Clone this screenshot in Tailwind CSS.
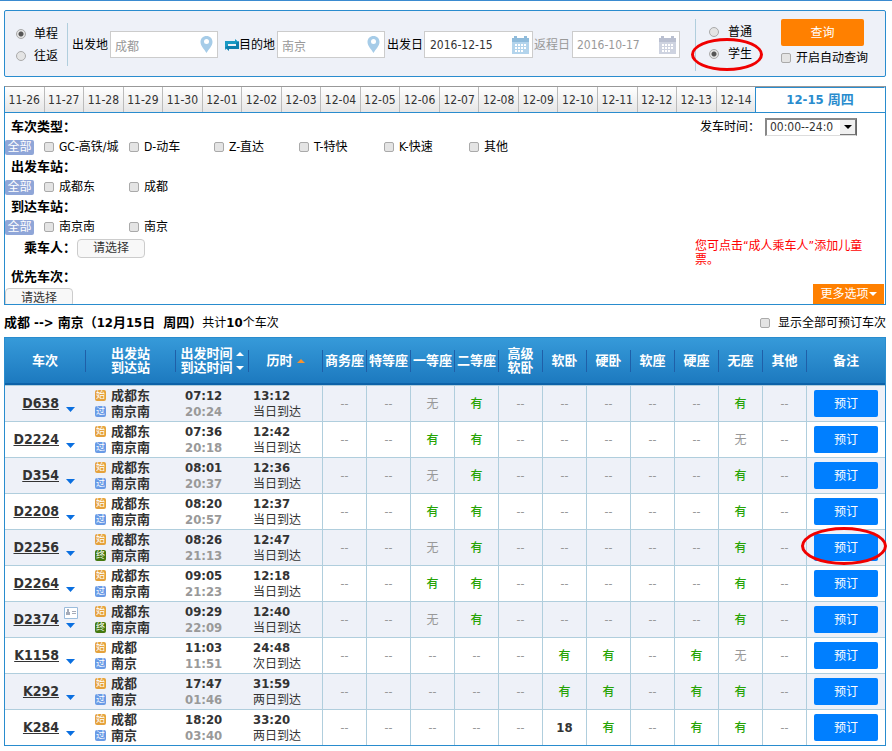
<!DOCTYPE html>
<html lang="zh-CN">
<head>
    <meta charset="UTF-8">
    <meta name="viewport" content="width=device-width, initial-scale=1.0">
    <title>车票预订 - 余票查询</title>
    <script src="https://cdn.jsdelivr.net/npm/@tailwindcss/browser@4"></script>
</head>
<body class="bg-white border-t border-[#3b8bd0] pl-1 pr-[6px] text-[12px] leading-4 text-black font-['DejaVu_Sans_Condensed','Noto_Sans_CJK_SC',sans-serif]">

    <!-- Search form -->
    <form class="mt-[9px] h-[67px] pt-[2px] flex items-center whitespace-nowrap rounded-xs border border-[#298cce] bg-[#eef1f8]">
        <div class="ml-[11px] w-[51px] flex flex-col gap-[6px]">
            <label class="flex items-center gap-[8px]">
                <input type="radio" name="trip" checked class="appearance-none size-[10px] rounded-full border border-[#aaa] bg-[#e4e4e4] checked:bg-[radial-gradient(circle,#555_2px,#e4e4e4_3px)]">单程
            </label>
            <label class="flex items-center gap-[8px]">
                <input type="radio" name="trip" class="appearance-none size-[10px] rounded-full border border-[#aaa] bg-[#e4e4e4] checked:bg-[radial-gradient(circle,#555_2px,#e4e4e4_3px)]">往返
            </label>
        </div>
        <div class="h-[43px] border-l border-[#b0cedd]"></div>

        <label for="from" class="ml-1 w-[38px]">出发地</label>
        <div class="relative w-[108px]">
            <input type="text" id="from" value="成都" class="w-full h-[27px] pl-1 pt-px border border-[#ccc] bg-white text-[#999]">
            <svg class="absolute right-[5px] top-[5px]" width="13" height="17" viewBox="0 0 13 17"><path d="M6.500 0C2.900 0 .5 2.600.5 6c0 4 4 7.500 6 11 2-3.500 6-7 6-11 0-3.400-2.400-6-6-6z" fill="#a6cce8"/><circle cx="6.500" cy="5.500" r="2.500" fill="#fff"/></svg>
        </div>
        <svg class="ml-[7px]" width="14" height="12" viewBox="0 0 14 12"><path d="M0 11V2h10V0l4 3.500L10 6V5H3v3z" fill="#1a9ac4"/><path d="M14 2v8H4v2L0 8.500 4 6v1h7V4z" fill="#0e7fae"/><path d="M3 5h8v2H3z" fill="#eef1f8"/></svg>
        <label for="to" class="w-[38px]">目的地</label>
        <div class="relative w-[108px]">
            <input type="text" id="to" value="南京" class="w-full h-[27px] pl-1 pt-px border border-[#ccc] bg-white text-[#999]">
            <svg class="absolute right-[5px] top-[5px]" width="13" height="17" viewBox="0 0 13 17"><path d="M6.500 0C2.900 0 .5 2.600.5 6c0 4 4 7.500 6 11 2-3.500 6-7 6-11 0-3.400-2.400-6-6-6z" fill="#a6cce8"/><circle cx="6.500" cy="5.500" r="2.500" fill="#fff"/></svg>
        </div>
        <label for="goDate" class="ml-[2px] w-[37px]">出发日</label>
        <div class="relative w-[109px]">
            <input type="text" id="goDate" value="2016-12-15" class="w-full h-[27px] pl-[5px] pt-px border border-[#ccc] bg-white text-[#333]">
            <svg class="absolute right-[4px] top-[5px]" width="17" height="18" viewBox="0 0 17 18"><path d="M0 2h2V0h3v2h7V0h3v2h2v4H0z" fill="#8fbbdb"/><path d="M0 6h17v12H0z" fill="#b3d4ec"/><path d="M3 8h2v2H3zM6 8h2v2H6zM9 8h2v2H9zM12 8h2v2h-2zM3 11h2v2H3zM6 11h2v2H6zM9 11h2v2H9zM12 11h2v2h-2zM3 14h2v2H3zM6 14h2v2H6zM9 14h2v2H9z" fill="#fff"/></svg>
        </div>
        <label for="backDate" class="ml-px w-[38px] text-[#999]">返程日</label>
        <div class="relative w-[108px]">
            <input type="text" id="backDate" value="2016-10-17" class="w-full h-[27px] pl-1 pt-px border border-[#ccc] bg-white text-[#999]">
            <svg class="absolute right-[4px] top-[5px]" width="17" height="18" viewBox="0 0 17 18"><path d="M0 2h2V0h3v2h7V0h3v2h2v4H0z" fill="#b9bfd0"/><path d="M0 6h17v12H0z" fill="#ced3e0"/><path d="M3 8h2v2H3zM6 8h2v2H6zM9 8h2v2H9zM12 8h2v2h-2zM3 11h2v2H3zM6 11h2v2H6zM9 11h2v2H9zM12 11h2v2h-2zM3 14h2v2H3zM6 14h2v2H6zM9 14h2v2H9z" fill="#fff"/></svg>
        </div>

        <div class="ml-[15px] h-[52px] border-l border-[#b0cedd]"></div>
        <div class="ml-[13px] mb-[3px] w-[72px] flex flex-col items-start gap-[6px]">
            <label class="flex items-center gap-[9px]">
                <input type="radio" name="ticket" class="appearance-none size-[10px] rounded-full border border-[#aaa] bg-[#e4e4e4] checked:bg-[radial-gradient(circle,#555_2px,#e4e4e4_3px)]">普通
            </label>
            <label class="relative flex items-center gap-[9px]">
                <input type="radio" name="ticket" checked class="appearance-none size-[10px] rounded-full border border-[#aaa] bg-[#e4e4e4] checked:bg-[radial-gradient(circle,#555_2px,#e4e4e4_3px)]">学生
                <span class="absolute -left-[18px] -top-2 w-[72px] h-[33px] rounded-[50%] border-3 border-[#f00000]"></span>
            </label>
        </div>
        <div class="flex flex-col items-start gap-1 mb-1">
            <button type="button" class="w-[83px] h-[27px] rounded-xs bg-[#ff8000] text-white">查询</button>
            <label class="flex items-center gap-[5px]">
                <input type="checkbox" class="appearance-none size-[10px] rounded-xs border border-[#aaa] bg-[#e4e4e4] checked:bg-[#555]">开启自动查询
            </label>
        </div>
    </form>

    <!-- Date tabs -->
    <div class="mt-[9px] h-[27px] flex border border-t-[#999] border-x-[#298cce] border-b-[#298cce] text-[#333]">
        <div id="dateTabs" class="flex-1 flex bg-linear-to-b from-white to-[#e6e6e6]"></div>
        <button class="w-[130px] border-x border-t border-[#298cce] border-r-white bg-white text-[13px] font-bold text-[#298cce]">12-15 周四</button>
    </div>

    <!-- Filters -->
    <div class="flex justify-between border border-t-0 border-[#298cce] overflow-hidden">
        <div class="pt-1">
            <h3 class="h-5 pl-[6px] text-[13px] leading-5 font-bold">车次类型：</h3>
            <div id="typeFilter" class="h-5 flex items-center"></div>
            <h3 class="h-5 pl-[6px] text-[13px] leading-5 font-bold">出发车站：</h3>
            <div id="fromFilter" class="h-5 flex items-center"></div>
            <h3 class="h-5 pl-[6px] text-[13px] leading-5 font-bold">到达车站：</h3>
            <div id="toFilter" class="h-5 flex items-center"></div>
            <div class="h-[22px] flex items-center pl-[19px]">
                <h3 class="w-[53px] text-[13px] leading-5 font-bold whitespace-nowrap">乘车人：</h3>
                <button class="w-[68px] h-[19px] rounded border border-[#ccc] bg-[#f8f8f8] leading-4 text-[#333]">请选择</button>
            </div>
            <h3 class="mt-2 h-5 pl-[6px] text-[13px] leading-5 font-bold">优先车次：</h3>
            <div class="mt-px h-4">
                <button class="w-[68px] h-[19px] rounded border border-[#ccc] bg-[#f8f8f8] leading-4 text-[#333]">请选择</button>
            </div>
        </div>
        <div class="w-[190px] flex flex-col justify-between">
            <div class="pt-[5px] pl-[5px] flex items-center">
                <label for="startTime" class="w-[65px]">发车时间：</label>
                <div class="relative w-[92px]">
                    <select id="startTime" class="block appearance-none w-full h-[18px] pl-[3px] pr-[18px] border-2 border-[#888] border-r border-b border-r-[#666] border-b-[#ddd] bg-white leading-[15px] text-[#333]">
                        <option value="00002400">00:00--24:0</option>
                        <option value="00000600">00:00--06:0</option>
                        <option value="06001200">06:00--12:0</option>
                        <option value="12001800">12:00--18:0</option>
                        <option value="18002400">18:00--24:0</option>
                    </select>
                    <span class="pointer-events-none absolute right-px top-[2px] w-4 h-[15px] flex items-center justify-center border-r border-b border-[#777] bg-[#f0f0f0]">
                        <svg width="8" height="4" viewBox="0 0 8 4"><path d="M0 0h8L4 4z" fill="#000"/></svg>
                    </span>
                </div>
            </div>
            <div>
                <p class="w-[170px] mb-[17px] leading-[14px] text-[#f00]">您可点击“成人乘车人”添加儿童票。</p>
                <div class="flex justify-end pr-px">
                    <button class="w-[71px] h-5 flex items-center justify-center bg-[#ff8000] text-white">更多选项<svg width="8" height="4" viewBox="0 0 8 4"><path d="M0 0h8L4 4z" fill="#fff"/></svg></button>
                </div>
            </div>
        </div>
    </div>

    <!-- Result summary -->
    <div class="h-8 pt-[3px] flex items-center justify-between">
        <p class="whitespace-pre"><b class="text-[13px]">成都 --&gt; 南京（12月15日  周四）</b>共计<b class="text-[13px]">10</b>个车次</p>
        <label class="flex items-center gap-2">
            <input type="checkbox" class="appearance-none size-[10px] rounded-xs border border-[#aaa] bg-[#e4e4e4] checked:bg-[#555]">显示全部可预订车次
        </label>
    </div>

    <!-- Train list -->
    <table class="w-full table-fixed border-separate border-spacing-0 border border-[#298cce] text-[#333]">
        <colgroup>
            <col class="w-[80px]"><col class="w-[90px]"><col class="w-[73px]"><col class="w-[74px]">
            <col class="w-[44px]"><col class="w-[44px]"><col class="w-[44px]"><col class="w-[44px]">
            <col class="w-[44px]"><col class="w-[44px]"><col class="w-[44px]"><col class="w-[44px]">
            <col class="w-[44px]"><col class="w-[44px]"><col class="w-[44px]"><col>
        </colgroup>
        <thead class="bg-linear-to-b from-[#369ad9] to-[#1b78be] text-[13px] leading-[14px] text-white whitespace-nowrap">
            <tr class="h-[47px]">
                <th class="p-0 border-b-2 border-[#0d62a8]">车次</th>
                <th class="p-0 border-b-2 border-[#0d62a8]"><div class="h-[22px] flex items-center justify-center border-l border-[#1f5fa8]">出发站<br>到达站</div></th>
                <th class="p-0 border-b-2 border-[#0d62a8]">
                    <div class="h-[22px] flex items-center justify-center gap-[3px] border-l border-[#1f5fa8]">
                        <span>出发时间<br>到达时间</span>
                        <svg width="8" height="18" viewBox="0 0 8 18"><path d="M0 4h8L4 0zM0 14h8l-4 4z" fill="#fff"/></svg>
                    </div>
                </th>
                <th class="p-0 border-b-2 border-[#0d62a8]">
                    <div class="h-[22px] flex items-center justify-center gap-1 border-l border-[#1f5fa8]">
                        历时<svg width="8" height="4" viewBox="0 0 8 4"><path d="M0 4h8L4 0z" fill="#f59331"/></svg>
                    </div>
                </th>
                <th class="p-0 border-b-2 border-[#0d62a8]"><div class="h-[22px] flex items-center justify-center border-l border-[#1f5fa8]">商务座</div></th>
                <th class="p-0 border-b-2 border-[#0d62a8]"><div class="h-[22px] flex items-center justify-center border-l border-[#1f5fa8]">特等座</div></th>
                <th class="p-0 border-b-2 border-[#0d62a8]"><div class="h-[22px] flex items-center justify-center border-l border-[#1f5fa8]">一等座</div></th>
                <th class="p-0 border-b-2 border-[#0d62a8]"><div class="h-[22px] flex items-center justify-center border-l border-[#1f5fa8]">二等座</div></th>
                <th class="p-0 border-b-2 border-[#0d62a8]"><div class="h-[22px] flex items-center justify-center border-l border-[#1f5fa8]"><span>高级<br>软卧</span></div></th>
                <th class="p-0 border-b-2 border-[#0d62a8]"><div class="h-[22px] flex items-center justify-center border-l border-[#1f5fa8]">软卧</div></th>
                <th class="p-0 border-b-2 border-[#0d62a8]"><div class="h-[22px] flex items-center justify-center border-l border-[#1f5fa8]">硬卧</div></th>
                <th class="p-0 border-b-2 border-[#0d62a8]"><div class="h-[22px] flex items-center justify-center border-l border-[#1f5fa8]">软座</div></th>
                <th class="p-0 border-b-2 border-[#0d62a8]"><div class="h-[22px] flex items-center justify-center border-l border-[#1f5fa8]">硬座</div></th>
                <th class="p-0 border-b-2 border-[#0d62a8]"><div class="h-[22px] flex items-center justify-center border-l border-[#1f5fa8]">无座</div></th>
                <th class="p-0 border-b-2 border-[#0d62a8]"><div class="h-[22px] flex items-center justify-center border-l border-[#1f5fa8]">其他</div></th>
                <th class="p-0 border-b-2 border-[#0d62a8]"><div class="h-[22px] flex items-center justify-center border-l border-[#1f5fa8]">备注</div></th>
            </tr>
        </thead>
        <tbody id="trainList"></tbody>
    </table>

    <script>
        const dates = ['11-26', '11-27', '11-28', '11-29', '11-30', '12-01', '12-02', '12-03', '12-04', '12-05',
            '12-06', '12-07', '12-08', '12-09', '12-10', '12-11', '12-12', '12-13', '12-14'];
        document.getElementById('dateTabs').innerHTML = dates.map((d, i) =>
            `<button class="flex-1 ${i < dates.length - 1 ? 'border-r border-[#bbb]' : ''}">${d}</button>`).join('');

        function renderFilter(id, items) {
            document.getElementById(id).innerHTML =
                '<button class="w-[29px] h-[15px] mr-[10px] rounded-xs bg-[#8fa6d8] leading-[15px] text-white">全部</button>' +
                items.map(t => `
                    <label class="w-[85px] flex items-center gap-[5px] whitespace-nowrap">
                        <input type="checkbox" class="shrink-0 appearance-none size-[10px] rounded-xs border border-[#aaa] bg-[#e4e4e4] checked:bg-[#555]">${t}
                    </label>`).join('');
        }
        renderFilter('typeFilter', ['GC-高铁/城', 'D-动车', 'Z-直达', 'T-特快', 'K-快速', '其他']);
        renderFilter('fromFilter', ['成都东', '成都']);
        renderFilter('toFilter', ['南京南', '南京']);

        // no, from, to, end mark, depart, arrive, duration, day, seats, flag
        const trains = [
            ['D638', '成都东', '南京南', '过', '07:12', '20:24', '13:12', '当日到达', '- - 无 有 - - - - - 有 -'],
            ['D2224', '成都东', '南京南', '过', '07:36', '20:18', '12:42', '当日到达', '- - 有 有 - - - - - 无 -'],
            ['D354', '成都东', '南京南', '过', '08:01', '20:37', '12:36', '当日到达', '- - 无 有 - - - - - 有 -'],
            ['D2208', '成都东', '南京南', '过', '08:20', '20:57', '12:37', '当日到达', '- - 有 有 - - - - - 有 -'],
            ['D2256', '成都东', '南京南', '终', '08:26', '21:13', '12:47', '当日到达', '- - 无 有 - - - - - 有 -', 'circled'],
            ['D2264', '成都东', '南京南', '过', '09:05', '21:23', '12:18', '当日到达', '- - 有 有 - - - - - 有 -'],
            ['D2374', '成都东', '南京南', '终', '09:29', '22:09', '12:40', '当日到达', '- - 无 有 - - - - - 有 -', 'idcard'],
            ['K1158', '成都', '南京', '过', '11:03', '11:51', '24:48', '次日到达', '- - - - - 有 有 - 有 无 -'],
            ['K292', '成都', '南京', '过', '17:47', '01:46', '31:59', '两日到达', '- - - - - 有 有 - 有 有 -'],
            ['K284', '成都', '南京', '过', '18:20', '03:40', '33:20', '两日到达', '- - - - - 18 有 - 有 有 -'],
        ];

        const markColor = { '始': 'bg-[#e5a23c]', '过': 'bg-[#6a9be6]', '终': 'bg-[#44790f]' };
        const mark = m => `<span class="size-[11px] flex items-center justify-center rounded-xs text-[9px] leading-[11px] font-normal text-white ${markColor[m]}">${m}</span>`;

        function seat(s) {
            if (s === '-') return '<span class="text-[#999]">--</span>';
            if (s === '无') return '<span class="text-[#999]">无</span>';
            if (s === '有') return '<span class="font-medium text-[#26a306]">有</span>';
            return `<span class="text-[13px] font-bold">${s}</span>`;
        }

        document.getElementById('trainList').innerHTML = trains.map(([no, from, to, end, dep, arr, dur, day, seats, flag]) => `
            <tr class="h-9 odd:bg-[#eef1f8]">
                <td class="p-0 border-t border-[#b0cedd]">
                    <div class="flex items-start">
                        <a href="#" class="w-[54px] pt-[6px] text-right text-[14px] font-bold underline">${no}</a>
                        <div class="ml-[5px] h-[30px] flex flex-col justify-end items-start gap-1 pb-[7px]">
                            ${flag === 'idcard' ? '<svg width="14" height="12" viewBox="0 0 14 12"><path d="M.5.5h13v11H.5z" fill="#fff" stroke="#9bbcdc"/><path d="M3 2h2v3h1v3H2V5h1zM8 4h4v1H8zM8 6h4v1H8z" fill="#a5abb8"/></svg>' : ''}
                            <svg class="ml-[2px]" width="9" height="5" viewBox="0 0 9 5"><path d="M0 0h9L4.500 5z" fill="#0a6fe0"/></svg>
                        </div>
                    </div>
                </td>
                <td class="p-0 pl-[10px] border-t border-[#b0cedd] text-[13px] font-bold">
                    <div class="flex items-center gap-[5px]">${mark('始')}${from}</div>
                    <div class="flex items-center gap-[5px]">${mark(end)}${to}</div>
                </td>
                <td class="p-0 pl-[10px] border-t border-[#b0cedd] text-[13px] font-bold"><div>${dep}</div><div class="text-[#999]">${arr}</div></td>
                <td class="p-0 pl-[5px] border-t border-[#b0cedd]"><div class="text-[13px] font-bold">${dur}</div><div>${day}</div></td>
                ${seats.split(' ').map(s => `<td class="p-0 pt-px border-t border-l border-[#b0cedd] text-center">${seat(s)}</td>`).join('')}
                <td class="p-0 border-t border-l border-[#b0cedd]">
                    <div class="relative w-[64px] mx-auto">
                        <button class="block w-full h-[27px] rounded-xs bg-[#007fff] text-white">预订</button>
                        ${flag === 'circled' ? '<span class="absolute -left-[13px] -top-[7px] w-[86px] h-[38px] rounded-[50%] border-3 border-[#f00000]"></span>' : ''}
                    </div>
                </td>
            </tr>`).join('');
    </script>
</body>
</html>
